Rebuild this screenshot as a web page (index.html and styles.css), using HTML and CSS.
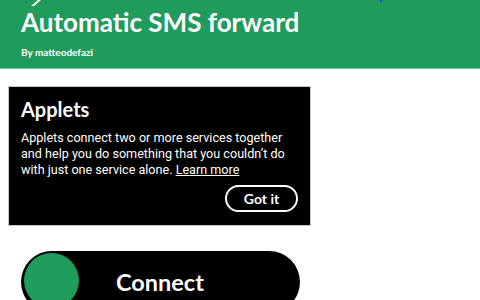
FILE: index.html
```html
<!DOCTYPE html>
<html>
<head>
<meta charset="utf-8">
<link rel="stylesheet" href="styles.css">
</head>
<body>
<header class="hero">
  <svg class="logo-tip" width="10" height="6" viewBox="0 0 10 6"><polygon points="0,6 7,0 10,0 3,6" fill="#fff"/></svg>
  <span class="blue-dot"></span>
  <h1 class="title">Automatic SMS forward</h1>
  <p class="author">By matteodefazi</p>
</header>
<main class="content">
  <section class="tip">
    <h2 class="tip-title">Applets</h2>
    <p class="tip-text">Applets connect two or more services together and help you do something that you couldn’t do with just one service alone. <a class="tip-link" href="#">Learn more</a></p>
    <div class="tip-actions"><button class="got-it">Got it</button></div>
  </section>
  <div class="connect">
    <span class="knob"></span>
    <span class="connect-label">Connect</span>
  </div>
</main>
</body>
</html>
```
FILE: styles.css
```css
html, body { margin: 0; padding: 0; background: #fff; overflow: hidden; }
body { font-family: Lato, "Open Sans", sans-serif; width: 480px; height: 300px; }
.hero {
  position: relative;
  background: #1f9b5c;
  height: 69px;
  border-bottom: 1px solid #6cc497;
  padding-left: 21px;
  box-sizing: border-box;
  color: #fff;
  display: flex;
  flex-direction: column;
}
.logo-tip { position: absolute; left: 31px; top: 0; }
.blue-dot { position: absolute; left: 380px; top: 0; width: 2px; height: 2px; background: #1a3cff; }
.title { margin: 6px 0 0; font-size: 26px; font-weight: 700; line-height: 32px; }
.author { margin: 7px 0 0; font-size: 10px; font-weight: 700; line-height: 14px; }
.content { padding: 17px 0 0 8px; }
.tip {
  width: 303px;
  height: 140px;
  box-sizing: border-box;
  background: #000;
  border: 1px solid #c8c8c8;
  color: #fff;
  padding: 10px 12px 0 12px;
  display: flex;
  flex-direction: column;
}
.tip-title { margin: 0; font-size: 20px; font-weight: 700; line-height: 24px; }
.tip-text { margin: 9px 0 0; font-family: Roboto, "Liberation Sans", sans-serif; font-size: 12.6px; line-height: 16px; }
.tip-link { color: #fff; text-decoration: underline; }
.tip-actions { display: flex; justify-content: flex-end; margin-top: 7px; }
.got-it {
  width: 73px; height: 27px;
  box-sizing: border-box;
  background: #000; color: #fff;
  border: 2px solid #fff; border-radius: 14px;
  font-family: inherit; font-size: 14px; font-weight: 700;
  padding: 0;
}
.connect {
  margin: 25px 0 0 13px;
  width: 279px; height: 62px;
  box-sizing: border-box;
  background: #000;
  border-radius: 31px;
  padding: 2px 3px;
  display: flex;
  align-items: flex-start;
}
.knob { width: 55px; height: 55px; border-radius: 50%; background: #1f9b5c; flex: none; }
.connect-label { color: #fff; font-size: 23.5px; font-weight: 700; margin: 14px 0 0 37px; line-height: 30px; }
```
